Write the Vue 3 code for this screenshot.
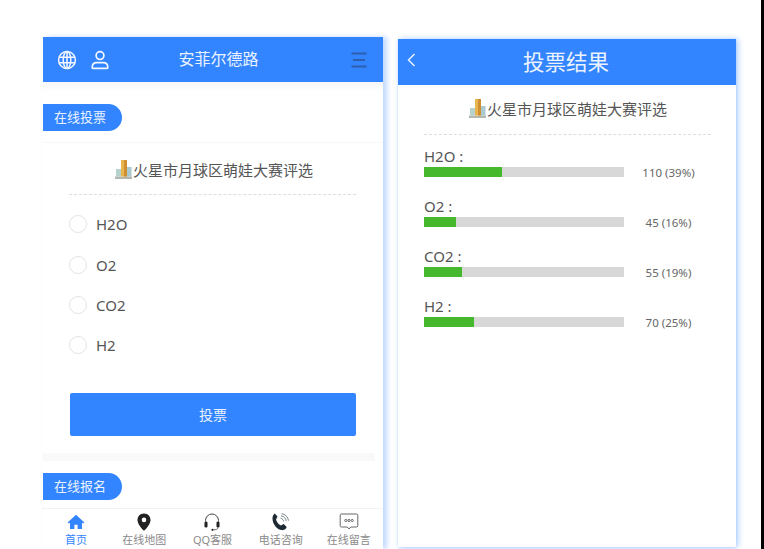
<script setup>
const options = ['H2O', 'O2', 'CO2', 'H2']

const results = [
  { name: 'H2O', count: 110, percent: 39 },
  { name: 'O2', count: 45, percent: 16 },
  { name: 'CO2', count: 55, percent: 19 },
  { name: 'H2', count: 70, percent: 25 },
]

const tabs = ['首页', '在线地图', 'QQ客服', '电话咨询', '在线留言']
</script>

<template>
  <div class="page">
    <section class="phone phone-left">
      <header class="top-bar">
        <div class="top-icons">
          <svg width="20" height="20" viewBox="0 0 20 20" fill="none" stroke="#f2f7ff" stroke-width="1.5">
            <circle cx="10" cy="10" r="8.4" />
            <ellipse cx="10" cy="10" rx="3.8" ry="8.4" />
            <path d="M1.800 7.200h16.400M1.800 12.800h16.400M10 1.600v16.800" />
          </svg>
          <svg width="20" height="20" viewBox="0 0 20 20" fill="none" stroke="#f2f7ff" stroke-width="1.700">
            <circle cx="10" cy="5.600" r="3.900" />
            <path d="M2.200 17.600c0-3.200 2-5 4.400-5h6.800c2.400 0 4.400 1.800 4.400 5 0 .5-.2.700-.7.700H2.900c-.5 0-.7-.2-.7-.7z" />
          </svg>
        </div>
        <div class="top-title">安菲尔德路</div>
        <svg class="menu-icon" width="16" height="16" viewBox="0 0 16 16" fill="none" stroke="#2c5fae" stroke-width="2">
          <path d="M0.500 1.500h15M2 8h12M0.500 14.500h15" />
        </svg>
      </header>
      <div class="band"></div>

      <div class="pill">在线投票</div>
      <div class="thin-line"></div>

      <div class="vote-title">
        <svg class="chart-icon" width="17" height="20" viewBox="0 0 17 20">
          <rect x="0" y="17.500" width="17" height="2.500" fill="#b4b6b0" />
          <rect x="1" y="10" width="5" height="7.500" fill="#b7d2cc" />
          <rect x="6" y="1" width="6" height="16.500" fill="#e8b54e" />
          <rect x="9" y="1" width="3" height="16.500" fill="#cf8f33" />
          <rect x="12" y="8" width="4.500" height="9.500" fill="#a9c8cf" />
        </svg>
        <span>火星市月球区萌娃大赛评选</span>
      </div>
      <div class="dashed left-dashed"></div>

      <ul class="options">
        <li v-for="opt in options" :key="opt" class="option">
          <span class="radio"></span>
          <span>{{ opt }}</span>
        </li>
      </ul>

      <button class="vote-btn">投票</button>
      <div class="gray-gap"></div>

      <div class="pill pill-second">在线报名</div>

      <nav class="tabbar">
        <div v-for="(tab, i) in tabs" :key="tab" class="tab" :class="{ active: i === 0 }">
          <svg v-if="i === 0" width="18" height="18" viewBox="0 0 18 18" fill="#3385ff">
            <path d="M9 1.800 0.600 9.400l1.100 1.200L3 9.500V16h4.400v-4.200h3.200V16H15V9.500l1.300 1.100 1.100-1.200z" />
          </svg>
          <svg v-else-if="i === 1" width="18" height="18" viewBox="0 0 18 18">
            <path fill="#222" fill-rule="evenodd" d="M9 0.500c-3.700 0-6.500 2.800-6.500 6.400C2.500 11 7 15.800 9 17.800c2-2 6.500-6.800 6.500-10.900C15.500 3.300 12.700 0.500 9 0.500zM9 4.600a2.300 2.300 0 1 1 0 4.600 2.300 2.300 0 0 1 0-4.600z" />
          </svg>
          <svg v-else-if="i === 2" width="20" height="18" viewBox="0 0 20 18" fill="none">
            <path d="M3.500 8.500V7.500a6.500 6.500 0 0 1 13 0v1" stroke="#444" stroke-width="1" />
            <rect x="2.500" y="8.500" width="3" height="6" rx="1.300" fill="#222" />
            <rect x="14.500" y="8.500" width="3" height="6" rx="1.300" fill="#222" />
            <path d="M16 14.500c0 1.700-2 2.300-4.500 2.300" stroke="#444" stroke-width="0.800" />
            <circle cx="10.500" cy="16.800" r="1.100" fill="#222" />
          </svg>
          <svg v-else-if="i === 3" width="20" height="18" viewBox="0 0 20 18" fill="none">
            <path fill="#1d2a33" d="M3.800 0.600 6.500 3.500 5 6.400c.6 2.600 2.400 4.700 5 6l2.700-1.300 3 3c-.6 2-2.600 3.300-4.800 3C6.500 17.300 1.700 11.700 1.500 5.800 1.400 3.600 2.200 1.700 3.800 0.600z" />
            <path stroke="#6d7a80" stroke-width="0.900" d="M9.500 5.200c1.700.2 3 1.600 3.200 3.300M10 2.900c3 .3 4.900 2.300 5.300 5.300M10.500 0.700c3.800.4 6.500 3 7 7" />
          </svg>
          <svg v-else width="20" height="18" viewBox="0 0 20 18" fill="none" stroke="#555" stroke-width="0.900">
            <path d="M2.500 1h15c.8 0 1.300.5 1.300 1.300v10.400c0 .8-.5 1.300-1.300 1.300h-5.800L10 16l-1.700-2H2.500c-.8 0-1.300-.5-1.300-1.300V2.300C1.200 1.500 1.700 1 2.500 1z" />
            <circle cx="6.800" cy="7.500" r="1.100" />
            <circle cx="10" cy="7.500" r="1.100" />
            <circle cx="13.200" cy="7.500" r="1.100" />
          </svg>
          <span class="tab-label">{{ tab }}</span>
        </div>
      </nav>
    </section>

    <section class="phone phone-right">
      <header class="result-bar">
        <svg class="back-icon" width="9" height="14" viewBox="0 0 9 14" fill="none" stroke="#e6f0ff" stroke-width="1.500">
          <path d="M7.500 1 1.500 7l6 6" />
        </svg>
        <div class="result-title">投票结果</div>
      </header>

      <div class="vote-title result-vote-title">
        <svg class="chart-icon" width="17" height="20" viewBox="0 0 17 20">
          <rect x="0" y="17.500" width="17" height="2.500" fill="#b4b6b0" />
          <rect x="1" y="10" width="5" height="7.500" fill="#b7d2cc" />
          <rect x="6" y="1" width="6" height="16.500" fill="#e8b54e" />
          <rect x="9" y="1" width="3" height="16.500" fill="#cf8f33" />
          <rect x="12" y="8" width="4.500" height="9.500" fill="#a9c8cf" />
        </svg>
        <span>火星市月球区萌娃大赛评选</span>
      </div>
      <div class="dashed right-dashed"></div>

      <div class="results">
        <div v-for="item in results" :key="item.name" class="result-row">
          <div class="result-name">{{ item.name }} :</div>
          <div class="result-line">
            <div class="track">
              <div class="fill" :style="{ width: item.percent / 100 * 200 + 'px' }"></div>
            </div>
            <div class="count">{{ item.count }} ({{ item.percent }}%)</div>
          </div>
        </div>
      </div>
    </section>

    <div class="edge"></div>
  </div>
</template>

<style>
html,
body {
  margin: 0;
  background: #fff;
  overflow: hidden;
}
</style>

<style scoped>
.page {
  display: flex;
  align-items: flex-start;
  gap: 15px;
  height: 549px;
  padding-left: 43px;
  box-sizing: border-box;
  overflow: hidden;
  font-family: "Noto Sans", "Noto Sans CJK SC", sans-serif;
  color: #555;
}

.edge {
  width: 3px;
  align-self: stretch;
  margin-left: auto;
  background: #000;
  flex: none;
}

.phone {
  background: #fff;
  flex: none;
}

.phone-left {
  width: 340px;
  height: 512px;
  margin-top: 37px;
  display: flex;
  flex-direction: column;
  box-shadow: 4px 0 5px rgba(51, 133, 255, 0.3);
}

.phone-right {
  width: 338px;
  height: 508px;
  margin-top: 39px;
  box-shadow: 2px 0 6px rgba(51, 133, 255, 0.4), 0 1px 2px rgba(51, 133, 255, 0.2);
}

.top-bar {
  height: 45px;
  background: #3385ff;
  display: flex;
  align-items: center;
  padding: 0 16px 0 14px;
  flex: none;
}

.top-icons {
  display: flex;
  gap: 13px;
}

.top-title {
  flex: 1;
  text-align: center;
  color: #eaf3ff;
  font-size: 16px;
  padding: 0 24px 3px 0;
}

.menu-icon {
  flex: none;
}

.band {
  height: 10px;
  background: linear-gradient(#f7f7f7, #fff);
  flex: none;
}

.pill {
  width: 79px;
  height: 27px;
  margin-top: 12px;
  line-height: 27px;
  padding-left: 11px;
  box-sizing: border-box;
  background: #3385ff;
  color: #eaf3ff;
  font-size: 13px;
  border-radius: 0 14px 14px 0;
  flex: none;
}

.thin-line {
  height: 1px;
  background: #f7f7f7;
  margin-top: 11px;
  flex: none;
}

.vote-title {
  display: flex;
  align-items: center;
  justify-content: center;
  height: 28px;
  margin-top: 12px;
  padding-left: 2px;
  font-size: 15px;
  color: #555;
  flex: none;
}

.chart-icon {
  margin-right: 1px;
  flex: none;
}

.dashed {
  border-top: 1px dashed #ddd;
  flex: none;
}

.left-dashed {
  margin: 11px 27px 0 26px;
}

.options {
  list-style: none;
  margin: 9px 0 0;
  padding: 0 0 0 26px;
  flex: none;
}

.option {
  display: flex;
  align-items: center;
  gap: 9px;
  height: 40.4px;
  font-size: 15px;
  color: #555;
}

.radio {
  width: 16px;
  height: 16px;
  border: 1px solid #e4e4e4;
  border-radius: 50%;
}

.vote-btn {
  display: block;
  width: 286px;
  height: 43px;
  margin: 27px 0 0 27px;
  border: none;
  border-radius: 2px;
  background: #3385ff;
  color: #eaf3ff;
  font-family: inherit;
  font-size: 14px;
  flex: none;
}

.gray-gap {
  height: 8px;
  margin: 17px 8px 0 0;
  background: #f9f9f9;
  flex: none;
}

.pill-second {
  margin-top: 12px;
}

.tabbar {
  display: grid;
  grid-template-columns: repeat(5, 68.2px);
  margin: 8px 0 0 -1px;
  border-top: 1px solid #f2f2f2;
  flex: 1;
}

.tab {
  display: flex;
  flex-direction: column;
  align-items: center;
  padding-top: 4px;
  gap: 1px;
  font-size: 11px;
  color: #8a8a8a;
  white-space: nowrap;
}

.tab.active {
  color: #3385ff;
}

.tab-label {
  line-height: 15px;
}

.result-bar {
  height: 46px;
  background: #3385ff;
  display: flex;
  align-items: center;
  position: relative;
}

.back-icon {
  position: absolute;
  left: 9px;
  top: 14px;
}

.result-title {
  flex: 1;
  text-align: center;
  color: #eaf3ff;
  font-size: 21.5px;
  padding: 0 2px 3px 0;
}

.result-vote-title {
  margin-top: 9px;
}

.right-dashed {
  margin: 12px 25px 0 26px;
}

.results {
  padding: 12px 0 0 26px;
}

.result-row {
  height: 50px;
}

.result-name {
  font-size: 15px;
  line-height: 18px;
  color: #555;
}

.result-line {
  display: flex;
  align-items: flex-start;
}

.track {
  width: 200px;
  height: 10px;
  margin-top: 2px;
  background: #d8d8d8;
  flex: none;
}

.fill {
  height: 100%;
  background: #46b82e;
}

.count {
  width: 89px;
  text-align: center;
  font-size: 11.5px;
  color: #666;
  line-height: 14px;
  padding-top: 1px;
}
</style>
